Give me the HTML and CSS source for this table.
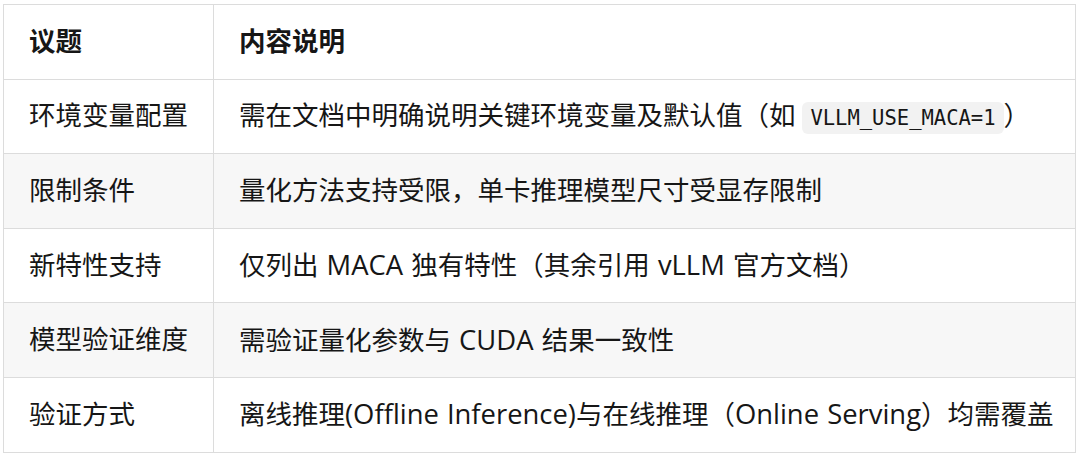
FILE: index.html
```html
<!DOCTYPE html>
<html lang="zh">
<head>
<meta charset="utf-8">
<link rel="stylesheet" href="styles.css">
</head>
<body>
<table class="tbl">
  <thead>
    <tr><th class="c1">议题</th><th>内容说明</th></tr>
  </thead>
  <tbody>
    <tr><td class="c1">环境变量配置</td><td>需在文档中明确说明关键环境变量及默认值（如 <code class="code">VLLM_USE_MACA=1</code>）</td></tr>
    <tr class="alt"><td class="c1">限制条件</td><td>量化方法支持受限，单卡推理模型尺寸受显存限制</td></tr>
    <tr><td class="c1">新特性支持</td><td>仅列出<span class="en"> MACA </span>独有特性（其余引用<span class="en"> vLLM </span>官方文档）</td></tr>
    <tr class="alt"><td class="c1">模型验证维度</td><td>需验证量化参数与<span class="en"> CUDA </span>结果一致性</td></tr>
    <tr><td class="c1">验证方式</td><td>离线推理<span class="en">(Offline Inference)</span>与在线推理（<span class="en">Online Serving</span>）均需覆盖</td></tr>
  </tbody>
</table>
</body>
</html>
```

FILE: styles.css
```css
html, body {
  margin: 0;
  padding: 0;
  background: #ffffff;
}
body {
  padding: 4px 0 0 3px;
  font-family: "Open Sans", "Noto Sans CJK SC", sans-serif;
  color: #161616;
}
.tbl {
  border-collapse: collapse;
  width: 1073px;
  font-size: 26.5px;
}
.tbl th, .tbl td {
  border: 1px solid #dcdcdc;
  height: 73.6px;
  padding: 0 0 0 25px;
  text-align: left;
  vertical-align: middle;
  white-space: nowrap;
  line-height: 1.2;
}
.tbl th {
  font-weight: 700;
}
.c1 {
  width: 184px;
}
.alt {
  background: #f7f7f7;
}
.en {
  font-size: 27.4px;
  word-spacing: 1px;
}
.code {
  font-family: "DejaVu Sans Mono", monospace;
  font-size: 20.5px;
  background: #f2f2f2;
  border-radius: 6px;
  padding: 4px 8px;
  color: #161616;
}
```
